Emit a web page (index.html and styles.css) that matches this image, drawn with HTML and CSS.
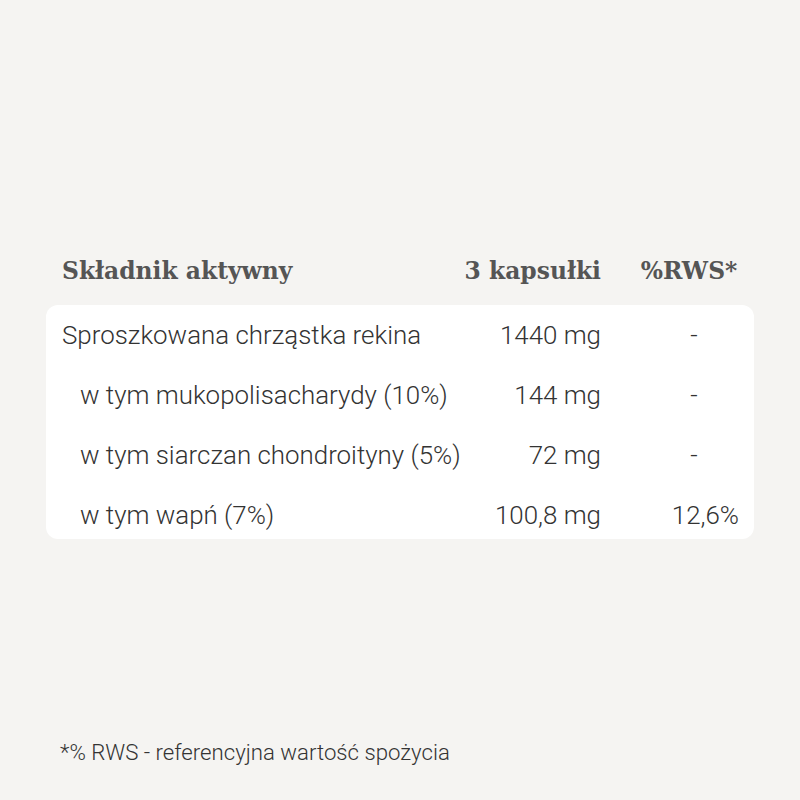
FILE: index.html
```html
<!DOCTYPE html>
<html lang="pl">
<head>
<meta charset="utf-8">
<link rel="stylesheet" href="styles.css">
</head>
<body>
<main class="page">
  <div class="head">
    <div class="c-name">Składnik aktywny</div>
    <div class="c-val">3 kapsułki</div>
    <div class="c-rws">%RWS*</div>
  </div>
  <div class="card">
    <div class="row">
      <div class="c-name">Sproszkowana chrząstka rekina</div>
      <div class="c-val">1440 mg</div>
      <div class="c-rws">-</div>
    </div>
    <div class="row sub">
      <div class="c-name">w tym mukopolisacharydy (10%)</div>
      <div class="c-val">144 mg</div>
      <div class="c-rws">-</div>
    </div>
    <div class="row sub">
      <div class="c-name">w tym siarczan chondroityny (5%)</div>
      <div class="c-val">72 mg</div>
      <div class="c-rws">-</div>
    </div>
    <div class="row sub">
      <div class="c-name">w tym wapń (7%)</div>
      <div class="c-val">100,8 mg</div>
      <div class="c-rws pct">12,6%</div>
    </div>
  </div>
  <p class="note">*% RWS - referencyjna wartość spożycia</p>
</main>
</body>
</html>
```

FILE: styles.css
```css
html, body {
  margin: 0;
  padding: 0;
  background: #f5f4f2;
}
body {
  width: 800px;
  height: 800px;
  font-family: Roboto, "Liberation Sans", sans-serif;
  color: #333;
}
.page {
  padding: 246px 46px 0 46px;
}
.head, .row {
  display: grid;
  grid-template-columns: 1fr 137px 137px;
  align-items: center;
  box-sizing: border-box;
}
.head {
  height: 50px;
  padding: 0 16px;
  font-family: "DejaVu Serif", serif;
  font-weight: bold;
  font-size: 23.4px;
  color: #555;
  margin-bottom: 9px;
}
.card {
  background: #fff;
  border-radius: 12px;
  padding: 0 16px;
}
.row {
  height: 60px;
  font-weight: 300;
  font-size: 25.9px;
}
.row:last-child {
  height: 54px;
  padding-top: 6px;
}
.row.sub .c-name {
  padding-left: 18px;
  white-space: nowrap;
}
.c-val {
  text-align: right;
}
.c-rws {
  text-align: center;
  padding-left: 49px;
}
.head .c-rws { padding-left: 39px; }
.row .c-rws.pct {
  text-align: right;
  padding-left: 0;
  margin-right: -1px;
}
.note {
  margin: 200px 0 0 14px;
  font-size: 22.2px;
  font-weight: 300;
  color: #333;
}
```
